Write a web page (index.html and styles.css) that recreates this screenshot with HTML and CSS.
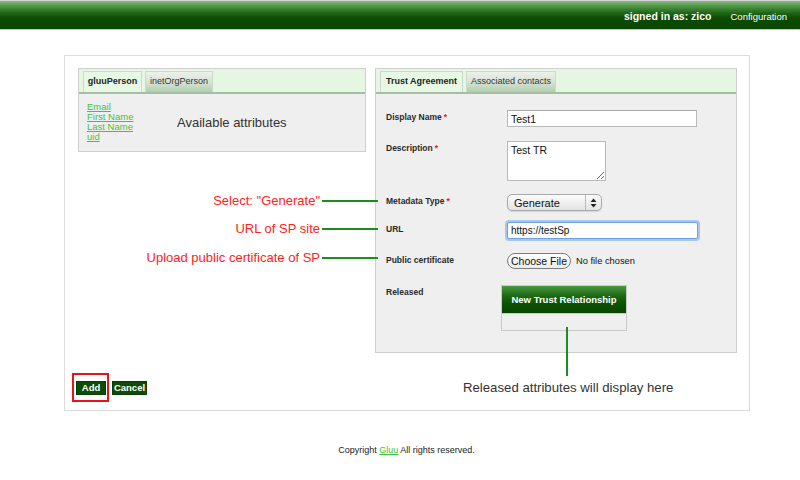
FILE: index.html
```html
<!DOCTYPE html>
<html>
<head>
<meta charset="utf-8">
<link rel="stylesheet" href="styles.css">
</head>
<body>
<header class="topbar">
  <span class="signed">signed in as: zico</span>
  <a class="config" href="#">Configuration</a>
</header>

<main class="page">
  <div class="columns">
    <section class="panel left-panel">
      <div class="tabs">
        <span class="tab active w-gluu">gluuPerson</span>
        <span class="tab inactive w-inet">inetOrgPerson</span>
      </div>
      <div class="attrs">
        <ul class="links">
          <li><a href="#">Email</a></li>
          <li><a href="#">First Name</a></li>
          <li><a href="#">Last Name</a></li>
          <li><a href="#">uid</a></li>
        </ul>
        <p class="avail">Available attributes</p>
      </div>
    </section>

    <section class="panel right-panel">
      <div class="tabs">
        <span class="tab active w-trust">Trust Agreement</span>
        <span class="tab inactive w-assoc">Associated contacts</span>
      </div>
      <div class="form">
        <div class="row r1">
          <label class="lbl">Display Name<span class="req">*</span></label>
          <input class="text" type="text" value="Test1">
        </div>
        <div class="row r2">
          <label class="lbl">Description<span class="req">*</span></label>
          <textarea class="area">Test TR</textarea>
        </div>
        <div class="row r3">
          <label class="lbl">Metadata Type<span class="req">*</span>
            <span class="callout"><span class="callout-text">Select: "Generate"</span><span class="callout-line"></span></span>
          </label>
          <span class="select"><span class="select-val">Generate</span><span class="select-arrows"><svg width="7" height="10" viewBox="0 0 7 10"><path d="M3.5 0.5 L6.5 4 L0.5 4 Z M3.5 9.5 L6.5 6 L0.5 6 Z" fill="#222"/></svg></span></span>
        </div>
        <div class="row r4">
          <label class="lbl">URL
            <span class="callout"><span class="callout-text">URL of SP site</span><span class="callout-line"></span></span>
          </label>
          <input class="text url" type="text" value="https://testSp">
        </div>
        <div class="row r5">
          <label class="lbl">Public certificate
            <span class="callout c5"><span class="callout-text">Upload public certificate of SP</span><span class="callout-line"></span></span>
          </label>
          <span class="file"><span class="file-btn">Choose File</span><span class="file-none">No file chosen</span></span>
        </div>
        <div class="row r6">
          <label class="lbl">Released</label>
          <div class="released">
            <div class="new-trust">New Trust Relationship</div>
            <div class="released-list"></div>
            <span class="vline"></span>
          </div>
        </div>
      </div>
    </section>
  </div>

  <div class="actions">
    <div class="add-box"><button class="btn add">Add</button></div>
    <button class="btn cancel">Cancel</button>
    <p class="note">Released attributes will display here</p>
  </div>
</main>

<footer class="footer">Copyright <a href="#">Gluu</a> All rights reserved.</footer>
</body>
</html>
```

FILE: styles.css
```css
* { box-sizing: border-box; }

body {
  margin: 0;
  width: 800px;
  height: 480px;
  overflow: hidden;
  background: #fff;
  color: #333;
  font-family: "Liberation Sans", Arial, sans-serif;
}

.topbar {
  height: 30px;
  border-top: 1px solid #d4d4d4;
  border-bottom: 1px solid #c6c6c6;
  background: linear-gradient(#8cbd82 0%, #4f9646 18%, #1d6214 45%, #0b4a00 62%, #0a4600 100%);
  display: flex;
  align-items: center;
  justify-content: flex-end;
  gap: 19px;
  padding: 2px 13px 0 0;
  color: #fff;
}
.signed { font-weight: bold; font-size: 10.5px; }
.config { font-size: 9.5px; color: #fff; text-decoration: none; }

.page {
  margin: 25px 0 0 64px;
  width: 686px;
  height: 356px;
  border: 1px solid #dcdcdc;
}

.columns {
  display: flex;
  align-items: flex-start;
  gap: 9px;
  padding: 12px 0 0 13px;
}

.panel { border: 1px solid #cfcfcf; background: #efefef; }
.left-panel { width: 288px; height: 84px; }
.right-panel { width: 362px; height: 285px; }

.tabs {
  height: 25px;
  background: #e5f6e3;
  border-bottom: 2px solid #a4bfa1;
  display: flex;
  gap: 3px;
  padding: 2px 0 0 4px;
}
.tab {
  font-size: 9px;
  text-align: center;
  padding-top: 4px;
  border: 1px solid #cdd9cb;
  border-bottom: none;
  white-space: nowrap;
}
.tab.active { background: #e7f9e5; font-weight: bold; color: #1e1e1e; }
.tab.inactive { background: linear-gradient(#eef0ee, #d3e2d1 55%, #b3cdb0); color: #333; }
.w-gluu { width: 59px; }
.w-inet { width: 68px; }
.w-trust { width: 83px; }
.w-assoc { width: 90px; }

.attrs {
  display: flex;
  align-items: center;
  padding: 8px 0 0 8px;
}
.links { list-style: none; margin: 0; padding: 0; width: 46px; }
.links li { font-size: 9.5px; line-height: 10px; white-space: nowrap; }
.links a, .footer a { color: #3ec53e; text-decoration: underline; }
.avail { margin: 0 0 0 44px; font-size: 13px; color: #333; }

.form { padding: 16px 0 0 10px; }
.row { display: flex; align-items: flex-start; }
.r1 { height: 31px; }
.r2 { height: 53px; }
.r3 { height: 28px; }
.r4 { height: 31px; }
.r5 { height: 32px; }

.lbl {
  position: relative;
  width: 121px;
  flex: none;
  padding-top: 2px;
  font-size: 8.5px;
  line-height: 11px;
  font-weight: bold;
  color: #2a2a2a;
}
.req { color: #e02020; margin-left: 2px; }

.text {
  width: 190px;
  height: 17px;
  border: 1px solid #b9b9b9;
  border-top-color: #a8a8a8;
  padding: 0 3px;
  font-family: "Liberation Sans", Arial, sans-serif;
  font-size: 10.5px;
  color: #111;
  background: #fff;
  outline: none;
}
.text.url {
  width: 191px;
  border-color: #6f9ede;
  box-shadow: 0 0 0 2px #a9c6ee;
  border-radius: 2px;
  font-size: 10px;
}
.area {
  width: 99px;
  height: 40px;
  border: 1px solid #b9b9b9;
  padding: 2px 3px;
  font-family: "Liberation Sans", Arial, sans-serif;
  font-size: 10.5px;
  color: #111;
  resize: both;
}

.select {
  width: 95px;
  height: 17px;
  border: 1px solid #a9a9a9;
  border-radius: 5px;
  background: linear-gradient(#fbfbfb, #e3e3e3);
  display: flex;
  align-items: center;
  box-shadow: 0 1px 1px rgba(0,0,0,0.12);
}
.select-val { flex: 1; font-size: 11px; color: #111; padding-left: 6px; }
.select-arrows {
  width: 16px;
  height: 100%;
  border-left: 1px solid #bbb;
  display: flex;
  align-items: center;
  justify-content: center;
}

.file { display: flex; align-items: center; }
.file-btn {
  height: 16px;
  width: 64px;
  border: 1px solid #7c7c7c;
  border-radius: 8px;
  background: linear-gradient(#ffffff, #ececec);
  font-size: 10.5px;
  line-height: 14px;
  text-align: center;
  color: #111;
}
.file-none { margin-left: 5px; font-size: 9.3px; color: #111; }

.released { position: relative; width: 126px; margin-left: -6px; }
.new-trust {
  height: 29px;
  border: 1px solid #c9c9c9;
  background: linear-gradient(#4a9a42 0%, #1d6a14 35%, #0c5203 65%, #0a4600 100%);
  color: #fff;
  font-size: 9.5px;
  font-weight: bold;
  display: flex;
  align-items: center;
  justify-content: center;
}
.released-list {
  height: 17px;
  border: 1px solid #c9c9c9;
  border-top: none;
  background: #efefef;
}
.vline {
  position: absolute;
  left: 65px;
  top: 42px;
  width: 2px;
  height: 49px;
  background: #1d8d1d;
}

.callout {
  position: absolute;
  right: calc(100% + 8px);
  top: 0;
  display: flex;
  align-items: center;
  gap: 2px;
  white-space: nowrap;
  font-weight: normal;
}
.callout.c5 { top: -2px; }
.callout-text { color: #ff2222; font-size: 13px; line-height: 14px; }
.callout-line { width: 56px; height: 2px; background: #1d8d1d; }

.actions {
  display: flex;
  align-items: center;
  margin-top: 20px;
  padding-left: 7px;
}
.add-box {
  width: 37px;
  height: 29px;
  border: 2px solid #e8141c;
  display: flex;
  align-items: center;
  justify-content: center;
  padding-left: 1px;
}
.btn {
  height: 14px;
  border: 1px solid #0a3e00;
  background: #0d4c04;
  color: #fff;
  font-family: "Liberation Sans", Arial, sans-serif;
  font-size: 9.5px;
  font-weight: bold;
  padding: 0;
  line-height: 12px;
}
.add { width: 30px; }
.cancel { width: 35px; margin-left: 3px; }
.note { margin: 0 0 0 316px; font-size: 13.2px; color: #333; }

.footer {
  margin-top: 34px;
  text-align: center;
  padding-left: 13px;
  font-size: 9px;
  color: #222;
}
```
